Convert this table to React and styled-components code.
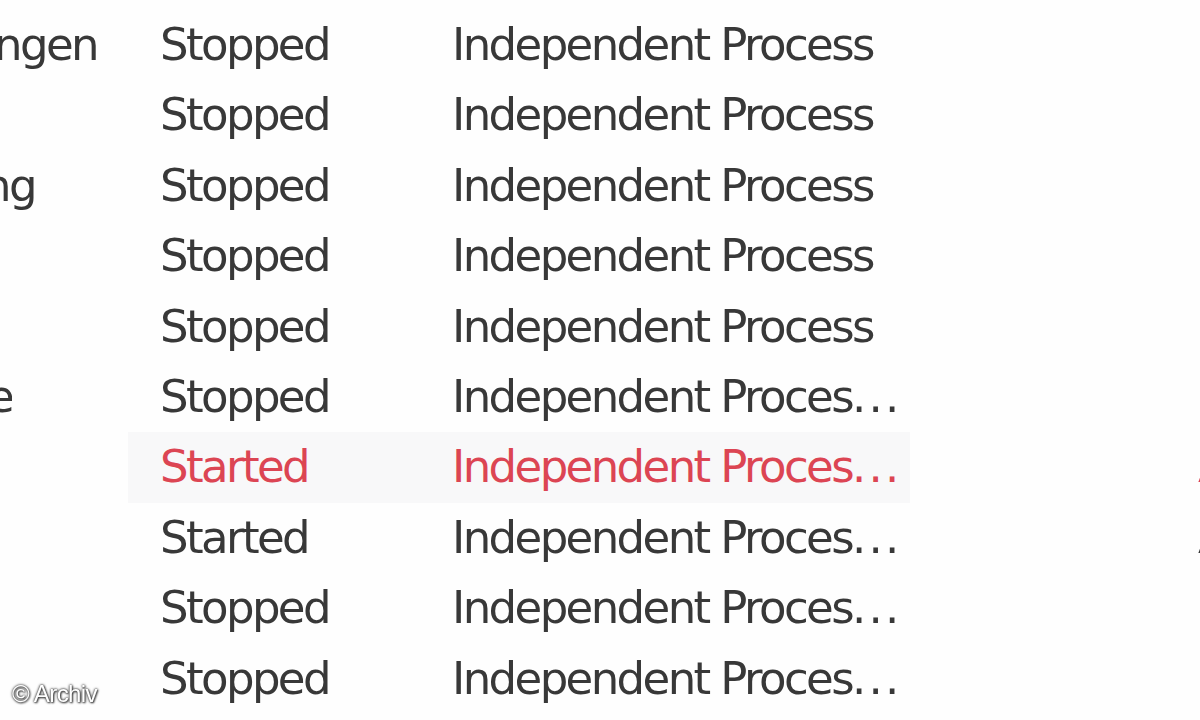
import React from 'react';
import styled, { createGlobalStyle } from 'styled-components';

const GlobalStyle = createGlobalStyle`
  html, body {
    margin: 0;
    padding: 0;
    background: #ffffff;
    width: 1200px;
    height: 720px;
    overflow: hidden;
  }
`;

const Page = styled.div`
  position: relative;
  width: 1200px;
  height: 720px;
  overflow: hidden;
  background: #fefefe;
`;

const List = styled.div`
  display: grid;
  grid-template-columns: 128px 324px 458px 290px;
  grid-auto-rows: 70.4px;
  padding-top: 10px;
  font-family: "DejaVu Sans", Verdana, sans-serif;
  font-size: 45px;
  letter-spacing: -2.6px;
  line-height: 70.4px;
  white-space: nowrap;
  filter: blur(0.55px);
`;

const Row = styled.div`
  display: contents;
  color: ${p => (p.$active ? '#dc4553' : '#383838')};
`;

const NameCell = styled.div`
  overflow: hidden;
`;

const NameClip = styled.div`
  display: flex;
  justify-content: flex-end;
  overflow: hidden;
`;

const StatusCell = styled.div`
  padding-left: 32px;
  background: ${p => (p.$active ? '#f8f8f9' : 'transparent')};
`;

const TypeCell = styled.div`
  overflow: hidden;
  background: ${p => (p.$active ? '#f8f8f9' : 'transparent')};
`;

const Dots = styled.span`
  letter-spacing: 2.2px;
`;

const StartCell = styled.div`
  padding-left: 288px;
  overflow: hidden;
`;

const Watermark = styled.div`
  position: absolute;
  left: 12px;
  bottom: 12px;
  font-family: "Liberation Sans", Arial, sans-serif;
  font-size: 24px;
  letter-spacing: -0.6px;
  color: #ffffff;
  text-shadow: 0 0 2px #333, 0 0 3px #555, 1px 1px 2px #444;
`;

const rows = [
  { name: 'Netzwerkverbindungen', clip: 97, status: 'Stopped', type: 'Independent Process' },
  { name: 'Fehlerberichterstattung', clip: 0, status: 'Stopped', type: 'Independent Process' },
  { name: 'Protokollierung', clip: 35, status: 'Stopped', type: 'Independent Process' },
  { name: 'Druckwarteschlange', clip: 0, status: 'Stopped', type: 'Independent Process' },
  { name: 'Geschützter Speicher', clip: 0, status: 'Stopped', type: 'Independent Process' },
  { name: 'Systemereignisdienste', clip: 12, status: 'Stopped', type: 'Independent Proces', cut: true },
  { name: 'Ereignisprotokoll', clip: 0, status: 'Started', type: 'Independent Proces', cut: true, start: 'Automatic', active: true },
  { name: 'Anwendungsverwaltung', clip: 0, status: 'Started', type: 'Independent Proces', cut: true, start: 'Automatic' },
  { name: 'Sicherheitskonten', clip: 0, status: 'Stopped', type: 'Independent Proces', cut: true },
  { name: 'Telefonie', clip: 0, status: 'Stopped', type: 'Independent Proces', cut: true },
];

function App() {
  return (
    <Page>
      <GlobalStyle />
      <List>
        {rows.map((r, i) => (
          <Row key={i} $active={r.active}>
            <NameCell>
              <NameClip style={{ width: r.clip }}>{r.clip ? r.name : ''}</NameClip>
            </NameCell>
            <StatusCell $active={r.active}>{r.status}</StatusCell>
            <TypeCell $active={r.active}>
              {r.type}
              {r.cut && <Dots>...</Dots>}
            </TypeCell>
            <StartCell>{r.start || ''}</StartCell>
          </Row>
        ))}
      </List>
      <Watermark>© Archiv</Watermark>
    </Page>
  );
}

export default App;
